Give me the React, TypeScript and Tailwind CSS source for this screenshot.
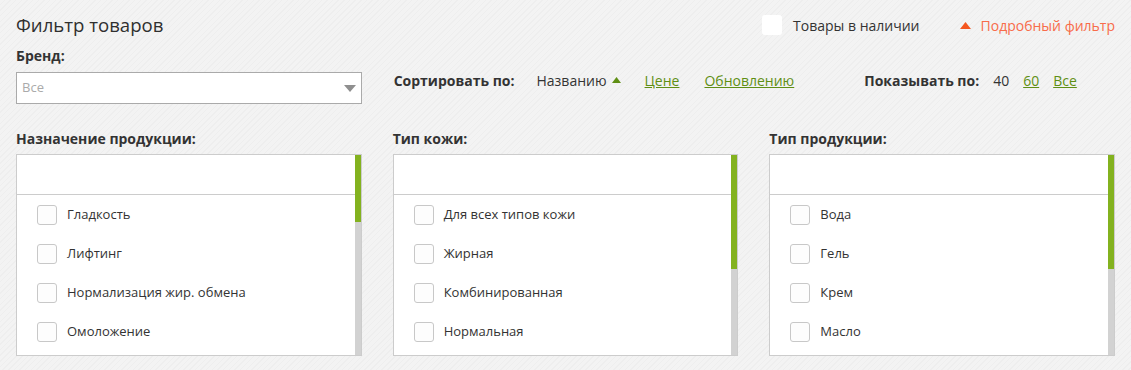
import React from "react";

const Check = () => (
  <span className="block w-5 h-5 shrink-0 rounded-[3px] border border-[#c8c8c8] bg-[#fdfdfd]" />
);

function ListBox({ items, thumb }: { items: string[]; thumb: number }) {
  return (
    <div className="flex h-[202px] border border-[#cccccc] bg-white">
      <div className="flex-1 flex flex-col">
        <div className="h-[40px] border-b border-[#cccccc]" />
        <div className="flex flex-col pt-[10px] gap-[19px] pl-5">
          {items.map((t) => (
            <div key={t} className="flex items-center gap-[10px] h-5">
              <Check />
              <span className="text-[13px] text-[#333]">{t}</span>
            </div>
          ))}
        </div>
      </div>
      <div className="w-[6px] flex flex-col bg-[#d2d2d2]">
        <div className="bg-[#83b21f]" style={{ height: thumb }} />
      </div>
    </div>
  );
}

export default function App() {
  return (
    <div
      className="w-[1131px] h-[370px] px-4 pt-[10px] text-[#333] bg-[repeating-linear-gradient(135deg,#f3f3f3_0px,#f3f3f3_3px,#eeeeee_3px,#eeeeee_4px)]"
      style={{ fontFamily: '"Open Sans", sans-serif' }}
    >
      <div className="flex items-center justify-between h-[30px]">
        <h1 className="text-[18.6px] text-[#2f2f2f]">Фильтр товаров</h1>
        <div className="flex items-center text-[14px]">
          <span className="block w-5 h-5 rounded-[3px] bg-white" />
          <span className="ml-[11px] text-[#333]">Товары в наличии</span>
          <svg width="11" height="7" viewBox="0 0 11 7" className="ml-[40px]">
            <polygon points="0,7 5.5,0 11,7" fill="#f4561f" />
          </svg>
          <span className="ml-[10px] text-[#f86c4a]">Подробный фильтр</span>
        </div>
      </div>

      <div className="grid grid-cols-3 gap-x-[31px] mt-[7px]">
        <div>
          <div className="text-[14px] font-bold leading-[18px]">Бренд:</div>
          <div className="mt-[7px] h-[32px] border border-[#aaaaaa] bg-white flex items-center justify-between pl-[5px] pr-[5px]">
            <span className="text-[13px] text-[#aaaaaa]">Все</span>
            <svg width="12" height="7" viewBox="0 0 12 7">
              <polygon points="0,0 12,0 6,7" fill="#8f8f8f" />
            </svg>
          </div>
        </div>
        <div className="col-span-2 flex items-center text-[14px] pl-[1px] h-[50px] pt-[16px]">
          <span className="font-bold">Сортировать по:</span>
          <span className="ml-[22px]">Названию</span>
          <svg width="9" height="6" viewBox="0 0 9 6" className="ml-[5px]">
            <polygon points="0,6 4.5,0 9,6" fill="#5f8f14" />
          </svg>
          <span className="ml-[24px] underline text-[#5f8f14]">Цене</span>
          <span className="ml-[25px] underline text-[#5f8f14]">Обновлению</span>
          <span className="ml-[70px] font-bold">Показывать по:</span>
          <span className="ml-[14px]">40</span>
          <span className="ml-[14px] underline text-[#5f8f14]">60</span>
          <span className="ml-[14px] underline text-[#5f8f14]">Все</span>
        </div>
      </div>

      <div className="grid grid-cols-3 gap-x-[31px] mt-[26px]">
        <div>
          <div className="text-[14px] font-bold leading-[18px] mb-[6px]">Назначение продукции:</div>
          <ListBox thumb={67} items={["Гладкость", "Лифтинг", "Нормализация жир. обмена", "Омоложение"]} />
        </div>
        <div>
          <div className="text-[14px] font-bold leading-[18px] mb-[6px]">Тип кожи:</div>
          <ListBox thumb={114} items={["Для всех типов кожи", "Жирная", "Комбинированная", "Нормальная"]} />
        </div>
        <div>
          <div className="text-[14px] font-bold leading-[18px] mb-[6px]">Тип продукции:</div>
          <ListBox thumb={114} items={["Вода", "Гель", "Крем", "Масло"]} />
        </div>
      </div>
    </div>
  );
}
